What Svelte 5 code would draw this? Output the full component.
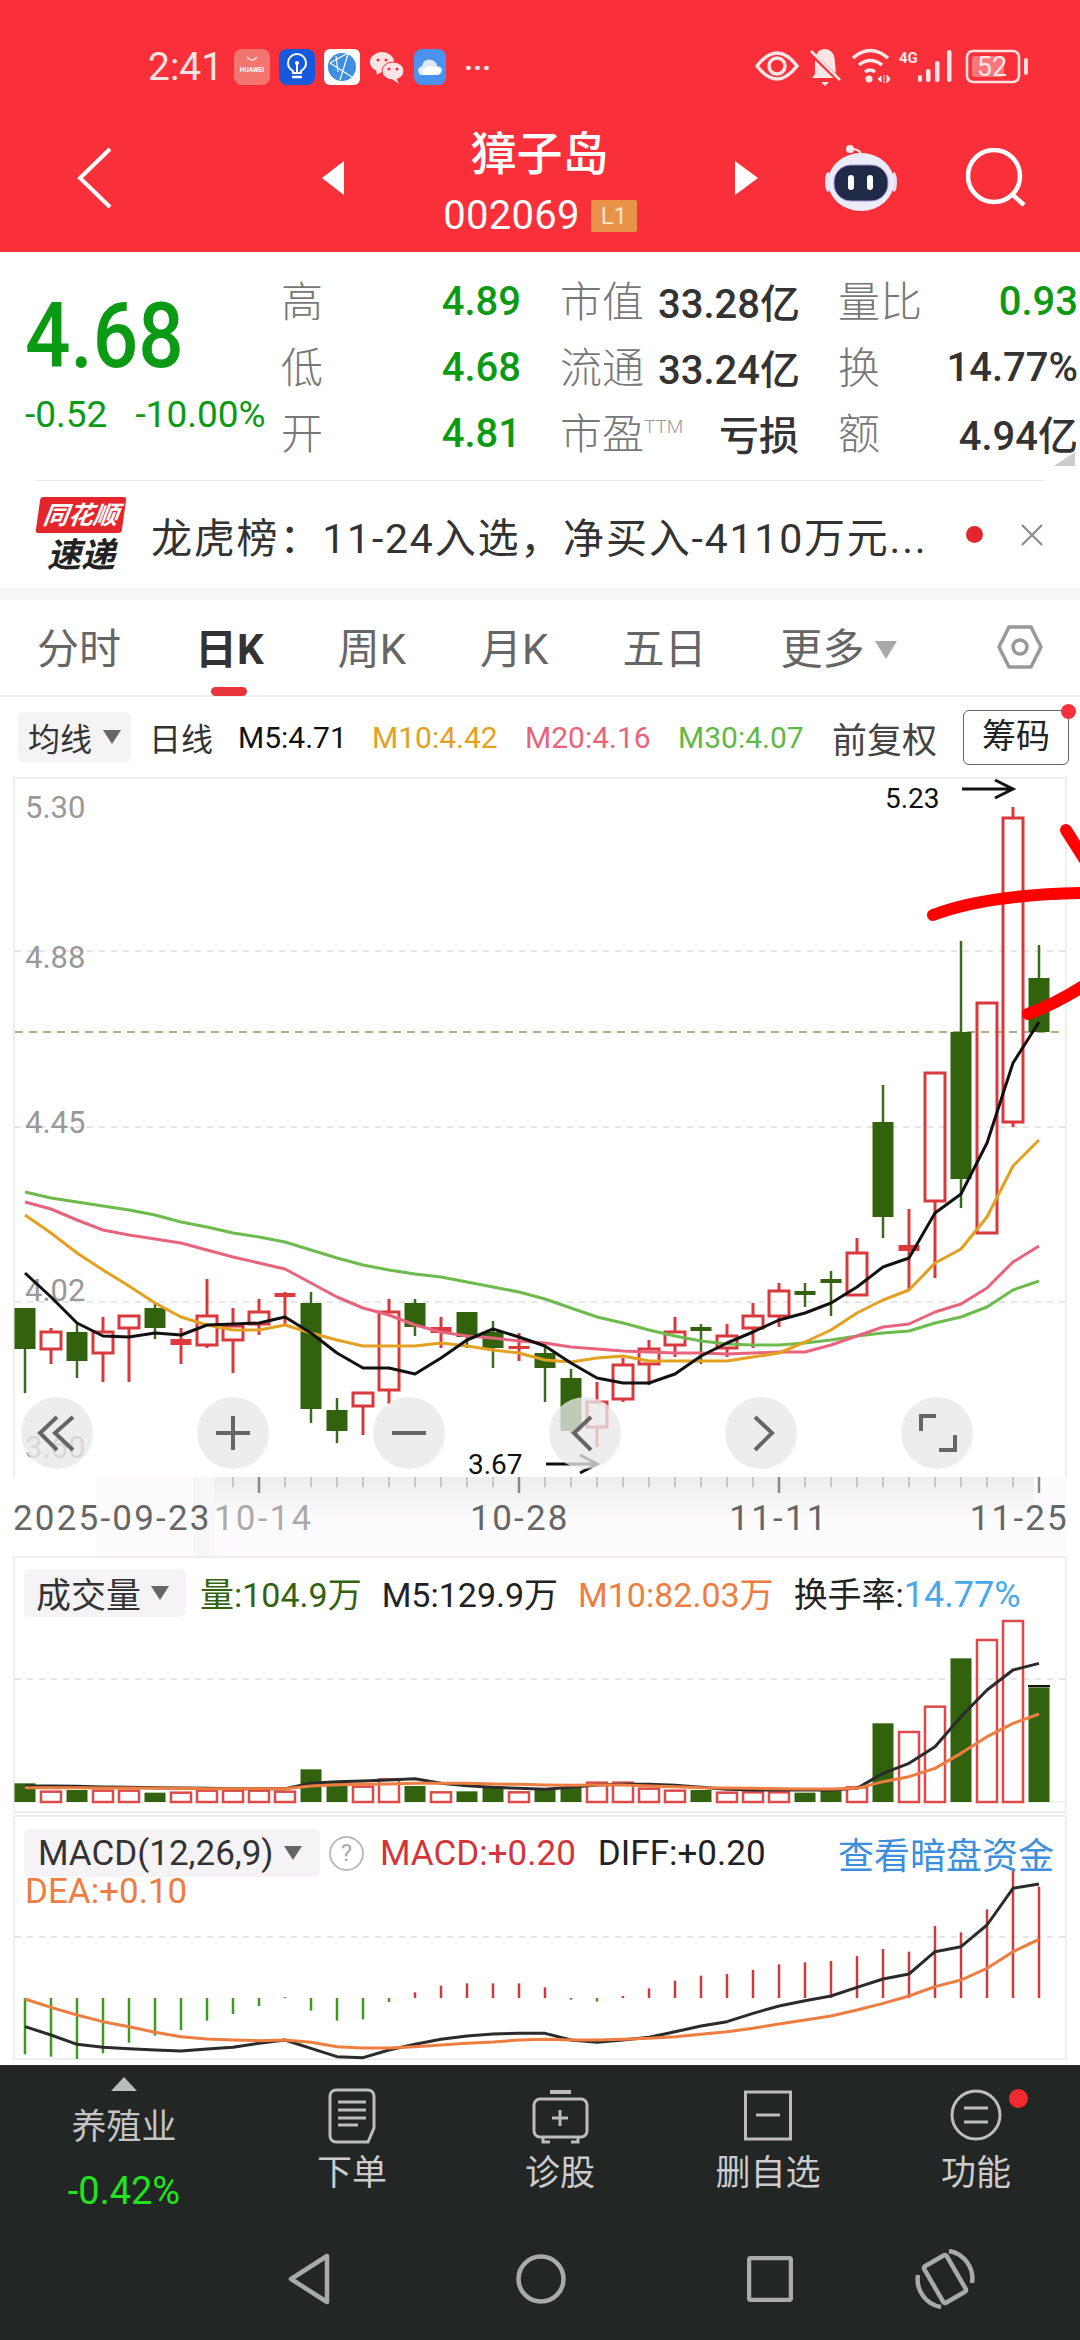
<script>
  const x = (i) => 25 + 26 * i;
  const pts = (ys) => ys.map((y, i) => `${x(i)},${y}`).join(' ');

  // [top of body, bottom of body, high, low, red?]
  const candles = [
    [1308, 1349, 1308, 1393, 0], [1332, 1349, 1328, 1364, 1], [1332, 1361, 1323, 1378, 0], [1332, 1353, 1317, 1382, 1],
    [1316, 1328, 1316, 1382, 1], [1308, 1328, 1303, 1339, 0], [1339, 1345, 1328, 1364, 1], [1316, 1345, 1279, 1348, 1],
    [1326, 1340, 1308, 1373, 1], [1312, 1324, 1299, 1335, 1], [1293, 1297, 1292, 1325, 1], [1303, 1409, 1292, 1423, 0],
    [1410, 1431, 1398, 1443, 0], [1393, 1406, 1393, 1435, 1], [1312, 1390, 1299, 1404, 1], [1303, 1327, 1299, 1336, 0],
    [1327, 1333, 1317, 1348, 1], [1312, 1337, 1312, 1348, 0], [1332, 1348, 1321, 1368, 0], [1346, 1349, 1333, 1361, 1],
    [1353, 1368, 1347, 1402, 0], [1378, 1431, 1369, 1433, 0], [1402, 1427, 1382, 1447, 1], [1365, 1399, 1358, 1402, 1],
    [1349, 1364, 1340, 1385, 1], [1332, 1345, 1317, 1357, 1], [1327, 1331, 1324, 1364, 0], [1336, 1348, 1324, 1357, 1],
    [1316, 1328, 1303, 1348, 1], [1291, 1316, 1283, 1327, 1], [1291, 1295, 1283, 1307, 0], [1279, 1283, 1271, 1316, 0],
    [1253, 1295, 1238, 1295, 1], [1122, 1217, 1085, 1238, 0], [1245, 1251, 1209, 1290, 1], [1073, 1201, 1073, 1278, 1],
    [1032, 1179, 941, 1208, 0], [1003, 1233, 1003, 1233, 1], [818, 1122, 807, 1127, 1], [978, 1032, 945, 1032, 0]
  ];

  const ma5 = [1273, 1297, 1323, 1336, 1337, 1333, 1335, 1325, 1324, 1323, 1317, 1333, 1353, 1368, 1368, 1374, 1358, 1340, 1329, 1337, 1346, 1363, 1378, 1383, 1383, 1374, 1356, 1343, 1332, 1320, 1313, 1303, 1287, 1267, 1258, 1213, 1194, 1143, 1063, 1022];
  const ma10 = [1215, 1233, 1253, 1270, 1286, 1303, 1317, 1325, 1330, 1330, 1325, 1333, 1340, 1346, 1346, 1346, 1343, 1346, 1350, 1353, 1360, 1362, 1358, 1356, 1361, 1361, 1361, 1361, 1357, 1353, 1342, 1330, 1313, 1300, 1290, 1263, 1249, 1217, 1166, 1140];
  const ma20 = [1202, 1209, 1220, 1230, 1235, 1239, 1243, 1250, 1257, 1263, 1269, 1283, 1297, 1308, 1315, 1325, 1332, 1336, 1338, 1341, 1343, 1347, 1349, 1351, 1352, 1353, 1353, 1354, 1353, 1352, 1352, 1345, 1336, 1327, 1324, 1312, 1304, 1288, 1262, 1246];
  const ma30 = [1192, 1198, 1202, 1206, 1210, 1215, 1222, 1227, 1233, 1237, 1242, 1250, 1258, 1265, 1270, 1274, 1277, 1282, 1287, 1292, 1299, 1308, 1317, 1323, 1330, 1336, 1341, 1344, 1345, 1345, 1343, 1340, 1336, 1333, 1331, 1323, 1317, 1307, 1290, 1281];

  const gridY = [951, 1127, 1302];
  const priceLabels = [['5.30', 818], ['4.88', 968], ['4.45', 1133], ['4.02', 1301]];

  const z = (v) => 1550 + v / 3;
  const volTops = [700, 725, 720, 722, 722, 728, 728, 722, 722, 722, 725, 658, 695, 710, 688, 708, 727, 724, 710, 727, 715, 712, 698, 698, 716, 722, 720, 728, 727, 727, 728, 722, 712, 520, 546, 470, 325, 270, 213, 412].map(z);
  const volMa5 = [708, 708, 709, 711, 712, 713, 714, 715, 716, 716, 716, 700, 695, 693, 690, 686, 700, 707, 712, 715, 718, 712, 705, 703, 703, 706, 712, 718, 720, 720, 720, 720, 715, 670, 640, 590, 500, 420, 360, 340].map(z);
  const volMa10 = [713, 713, 713, 714, 714, 715, 715, 716, 716, 716, 716, 708, 704, 703, 702, 700, 700, 700, 702, 703, 705, 706, 705, 705, 708, 710, 713, 714, 715, 716, 717, 717, 715, 695, 680, 655, 610, 560, 520, 492].map(z);

  const macdBars = [1513, 1520, 1527, 1510, 1478, 1457, 1440, 1412, 1392, 1368, 1341, 1382, 1412, 1408, 1356, 1327, 1307, 1300, 1300, 1300, 1312, 1349, 1355, 1338, 1315, 1292, 1277, 1272, 1260, 1243, 1237, 1233, 1218, 1197, 1205, 1128, 1147, 1078, 955, 1010].map(z);
  const macdDiff = [1430, 1455, 1483, 1492, 1496, 1500, 1503, 1497, 1492, 1480, 1470, 1495, 1520, 1523, 1500, 1483, 1468, 1458, 1452, 1450, 1450, 1470, 1477, 1470, 1462, 1445, 1428, 1415, 1390, 1368, 1352, 1338, 1312, 1287, 1272, 1205, 1190, 1125, 1015, 1002].map(z);
  const macdDea = [1347, 1372, 1395, 1415, 1430, 1447, 1460, 1467, 1470, 1472, 1470, 1477, 1490, 1494, 1494, 1490, 1485, 1480, 1476, 1470, 1468, 1470, 1470, 1468, 1465, 1460, 1453, 1445, 1435, 1422, 1410, 1398, 1380, 1360, 1338, 1310, 1290, 1255, 1205, 1168].map(z);

  const minorTicks = Array.from({ length: 32 }, (_, i) => 233 + 26 * i);
  const majorTicks = [259, 519, 779, 1039];
  const tabs = ['分时', '日K', '周K', '月K', '五日'];
</script>

<div class="page">
  <header>
    <div class="status">
      <span class="time">2:41</span>
      <div class="notifs">
        <svg width="36" height="36" viewBox="0 0 36 36">
          <rect width="36" height="36" rx="8" fill="#f2756f" />
          <path d="M13 8q5 6 10 0" fill="none" stroke="#ffd9d6" stroke-width="1.6" />
          <text x="18" y="23" class="hw">HUAWEI</text>
        </svg>
        <svg width="36" height="36" viewBox="0 0 36 36">
          <rect width="36" height="36" rx="8" fill="#1659dd" />
          <path d="M14 24v-2q-5-3-5-8a9 9 0 0 1 18 0q0 5-5 8v2z" fill="none" stroke="#fff" stroke-width="2" />
          <path d="M18 23v-8" stroke="#fff" stroke-width="2" />
          <circle cx="18" cy="14" r="2" fill="#fff" />
          <path d="M14 28h8" stroke="#fff" stroke-width="2.4" stroke-linecap="round" />
        </svg>
        <svg width="36" height="36" viewBox="0 0 36 36">
          <rect width="36" height="36" rx="6" fill="#fff" />
          <circle cx="18" cy="18" r="14" fill="#3f8ee2" />
          <path d="M6 14l18-10M6 14l22 14M24 5l-8 26M12 7l2 16" stroke="#fff" stroke-width="1.2" fill="none" />
        </svg>
        <svg width="36" height="36" viewBox="0 0 36 36">
          <ellipse cx="13" cy="13" rx="12" ry="10" fill="#ffe4e4" />
          <path d="M7 20l1 6 6-4z" fill="#ffe4e4" />
          <circle cx="9" cy="11" r="1.5" fill="#f9303a" />
          <circle cx="17" cy="11" r="1.5" fill="#f9303a" />
          <ellipse cx="24" cy="22" rx="11" ry="9" fill="#ffe4e4" stroke="#f9303a" />
          <path d="M27 29l3 6-7-5z" fill="#ffe4e4" />
          <circle cx="20" cy="20" r="1.5" fill="#f9303a" />
          <circle cx="28" cy="20" r="1.5" fill="#f9303a" />
        </svg>
        <svg width="32" height="36" viewBox="0 0 32 36">
          <rect width="32" height="36" rx="8" fill="#4b91ee" />
          <path d="M5 25q-3-6 3-8 2-8 10-6 5 2 5 6 6 1 5 5t-6 4H8q-2 0-3-1z" fill="#dbe9fb" />
          <path d="M10 26q-4-4 1-7 3-4 7-1 7-1 8 3 1 5-4 5z" fill="#fff" />
        </svg>
        <span class="more">···</span>
      </div>
      <svg class="sys" width="280" height="60" viewBox="750 37 280 60">
        <path d="M757 66q20-26 40 0q-20 26-40 0z" fill="none" stroke="#ffe6e6" stroke-width="3.5" />
        <circle cx="777" cy="66" r="8" fill="none" stroke="#ffe6e6" stroke-width="3.5" />
        <path d="M825 49q10 1 10 14l1 11 3 4h-27l3-4v-11q0-14 10-14z" fill="#ffe6e6" />
        <path d="M821 82h8l-4 4z" fill="#ffe6e6" />
        <path d="M810 52l30 29" stroke="#f9303a" stroke-width="5" />
        <path d="M811 51l29 29" stroke="#ffe6e6" stroke-width="2.5" />
        <path d="M853 58q17-15 35 0M859 65q11-9 23 0M865 72q5-4 10 0" fill="none" stroke="#ffe6e6" stroke-width="3.5" />
        <circle cx="869" cy="79" r="3.5" fill="#ffe6e6" />
        <path d="M881 76l-3 3 3 3zM884 75v8M887 75l3 4-3 4z" fill="#ffe6e6" stroke="#ffe6e6" />
        <text x="899" y="63" class="g4">4G</text>
        <rect x="918" y="75" width="4" height="7" rx="2" fill="#ffe6e6" />
        <rect x="926" y="69" width="4.5" height="13" rx="2" fill="#ffe6e6" />
        <rect x="935" y="61" width="4.5" height="21" rx="2" fill="#ffe6e6" />
        <rect x="947" y="50" width="4.5" height="32" rx="2" fill="#ffe6e6" />
        <rect x="967" y="51" width="52" height="31" rx="6" fill="none" stroke="#ffe0e0" stroke-width="2.6" />
        <rect x="972" y="56" width="32" height="21" rx="3" fill="#f9767c" />
        <text x="992" y="76" class="bat">52</text>
        <rect x="1024" y="58" width="4" height="17" rx="2" fill="#ffe0e0" />
      </svg>
    </div>

    <div class="titlebar">
      <svg class="back" width="35" height="62" viewBox="0 0 35 62">
        <path d="M33 2L3 31l30 29" fill="none" stroke="#fff" stroke-width="4" />
      </svg>
      <svg class="prev" width="22" height="34" viewBox="0 0 22 34"><path d="M22 0v34L0 17z" fill="#fff" /></svg>
      <div class="title">
        <div class="name">獐子岛</div>
        <div class="code">002069<span class="l1">L1</span></div>
      </div>
      <svg width="23" height="34" viewBox="0 0 23 34"><path d="M0 0v34l23-17z" fill="#fff" /></svg>
      <svg class="robot" width="72" height="68" viewBox="0 0 72 68">
        <circle cx="25" cy="5" r="4" fill="#f3e9f2" />
        <path d="M27 5q10 0 9 9" fill="none" stroke="#f3e9f2" stroke-width="2" />
        <ellipse cx="3" cy="38" rx="3" ry="10" fill="#e6e2f3" />
        <ellipse cx="69" cy="38" rx="3" ry="10" fill="#e6e2f3" />
        <ellipse cx="36" cy="38" rx="33" ry="29" fill="#ecebf8" />
        <rect x="9" y="21" width="54" height="36" rx="17" fill="#1f2a47" stroke="#a995e6" />
        <rect x="23" y="31" width="6" height="15" rx="3" fill="#fff" />
        <rect x="42" y="31" width="6" height="15" rx="3" fill="#fff" />
      </svg>
      <svg class="search" width="60" height="60" viewBox="0 0 60 60">
        <circle cx="28" cy="28" r="26" fill="none" stroke="#fff" stroke-width="4.5" />
        <path d="M47 47l11 10" stroke="#fff" stroke-width="4.5" />
      </svg>
    </div>
  </header>

  <section class="quote">
    <div class="price-col">
      <div class="price">4.68</div>
      <div class="change"><span>-0.52</span><span>-10.00%</span></div>
    </div>
    <div class="stats">
      <span class="lab">高</span><span class="val down">4.89</span>
      <span class="lab pl">市值</span><span class="val">33.28亿</span>
      <span class="lab pl">量比</span><span class="val down">0.93</span>
      <span class="lab">低</span><span class="val down">4.68</span>
      <span class="lab pl">流通</span><span class="val">33.24亿</span>
      <span class="lab pl">换</span><span class="val">14.77%</span>
      <span class="lab">开</span><span class="val down">4.81</span>
      <span class="lab pl">市盈<sup>TTM</sup></span><span class="val">亏损</span>
      <span class="lab pl">额</span><span class="val">4.94亿</span>
    </div>
    <div class="corner"></div>
  </section>

  <div class="rule"></div>

  <section class="news">
    <div class="logo">
      <div class="logo-top">同花顺</div>
      <div class="logo-bottom">速递</div>
    </div>
    <div class="news-text">龙虎榜：11-24入选，净买入-4110万元...</div>
    <span class="news-dot"></span>
    <svg width="22" height="22" viewBox="0 0 22 22"><path d="M1 1l20 20M21 1L1 21" stroke="#888" stroke-width="2" /></svg>
  </section>

  <nav class="tabs">
    {#each tabs as tab, i}
      <span class="tab" class:active={i === 1}>{tab}</span>
    {/each}
    <span class="tab more-tab">更多<i class="caret big"></i></span>
    <svg class="gear" width="46" height="46" viewBox="0 0 46 46">
      <path d="M12 3h22l10 20-10 20H12L2 23z" fill="none" stroke="#999" stroke-width="3.5" stroke-linejoin="round" />
      <circle cx="23" cy="23" r="7" fill="none" stroke="#999" stroke-width="3.5" />
    </svg>
  </nav>

  <div class="toolbar">
    <span class="tag">均线<i class="caret"></i></span>
    <span class="t1">日线</span>
    <span class="t2">M5:4.71</span>
    <span class="t3 c10">M10:4.42</span>
    <span class="t3 c20">M20:4.16</span>
    <span class="t3 c30">M30:4.07</span>
    <span class="t4">前复权</span>
    <span class="chip">筹码<i class="chip-dot"></i></span>
  </div>

  <section class="kline">
    <svg class="plot" width="1054" height="700" viewBox="13 777 1054 700">
      {#each gridY as y}
        <line x1="15" x2="1065" y1={y} y2={y} class="grid" />
      {/each}
      <line x1="15" x2="1065" y1="1032" y2="1032" class="last" />
      {#each priceLabels as [label, y]}
        <text x="25" {y} class="axis">{label}</text>
      {/each}
      <text x="25" y="1458" class="axis">3.60</text>

      {#each candles as [top, bottom, high, low, red], i}
        {#if red}
          <line x1={x(i)} x2={x(i)} y1={high} y2={top} class="wick-r" />
          <line x1={x(i)} x2={x(i)} y1={bottom} y2={low} class="wick-r" />
          {#if bottom - top < 7}
            <rect x={x(i) - 10.5} y={top} width="21" height={bottom - top} fill="#dc3a3c" />
          {:else}
            <rect x={x(i) - 10} y={top} width="20" height={bottom - top} class="body-r" />
          {/if}
        {:else}
          <line x1={x(i)} x2={x(i)} y1={high} y2={low} class="wick-g" />
          <rect x={x(i) - 10.5} y={top} width="21" height={bottom - top} fill="#33620f" />
        {/if}
      {/each}

      <polyline points={pts(ma30)} class="ln" stroke="#6cbb4c" />
      <polyline points={pts(ma20)} class="ln" stroke="#e8647c" />
      <polyline points={pts(ma10)} class="ln" stroke="#e4a021" />
      <polyline points={pts(ma5)} class="ln" stroke="#111" />

      <text x="885" y="808" class="mark">5.23</text>
      <path d="M962 789h50M995 780l18 9-18 9" class="arrow" />
      <text x="468" y="1474" class="mark">3.67</text>
      <path d="M546 1464h50M580 1455l17 9-17 9" class="arrow" />

      <path d="M933 915Q985 895 1080 893" class="pen" />
      <path d="M1028 1014Q1055 1004 1085 985" class="pen" />
      <path d="M1066 830L1085 860" class="pen" />
    </svg>
    <div class="kbtns">
      <button aria-label="back"><svg width="72" height="72" viewBox="0 0 72 72"><path d="M36 20L19 36l17 17M52 20L34 36l18 17" /></svg></button>
      <button aria-label="in"><svg width="72" height="72" viewBox="0 0 72 72"><path d="M19 36h34M36 19v34" /></svg></button>
      <button aria-label="out"><svg width="72" height="72" viewBox="0 0 72 72"><path d="M19 36h34" /></svg></button>
      <button aria-label="left"><svg width="72" height="72" viewBox="0 0 72 72"><path d="M42 20L25 36l17 17" /></svg></button>
      <button aria-label="right"><svg width="72" height="72" viewBox="0 0 72 72"><path d="M30 20l17 16-17 17" /></svg></button>
      <button aria-label="full"><svg width="72" height="72" viewBox="0 0 72 72"><path d="M20 34V19h15M54 38v15H38" /></svg></button>
    </div>
  </section>

  <svg class="dates" width="1080" height="79" viewBox="0 1477 1080 79">
    <defs>
      <linearGradient id="smear" x1="0" x2="0" y1="0" y2="1">
        <stop offset="0" stop-color="#eeeeee" />
        <stop offset="1" stop-color="#fbfafb" />
      </linearGradient>
    </defs>
    <rect x="96" y="1477" width="971" height="79" fill="#fdfbfd" />
    <rect x="193" y="1477" width="21" height="79" fill="#f7f7f7" />
    <rect x="214" y="1477" width="820" height="40" fill="url(#smear)" />
    {#each minorTicks as t}
      <line x1={t} x2={t} y1="1477" y2="1487" stroke="#bbb" stroke-width="1.5" />
    {/each}
    {#each majorTicks as t}
      <line x1={t} x2={t} y1="1477" y2="1493" stroke="#888" stroke-width="2.5" />
    {/each}
    <text x="13" y="1530" class="date">2025-09-23</text>
    <text x="214" y="1530" class="date" fill-opacity="0.55">10-14</text>
    <text x="520" y="1530" class="date mid">10-28</text>
    <text x="779" y="1530" class="date mid">11-11</text>
    <text x="1069" y="1530" class="date end">11-25</text>
  </svg>

  <section class="panel vol">
    <svg class="plot" width="1054" height="257" viewBox="13 1556 1054 257">
      <line x1="15" x2="1065" y1="1679" y2="1679" class="grid" />
      <line x1="15" x2="1065" y1="1802" y2="1802" class="base" />
      {#each volTops as top, i}
        {#if candles[i][4]}
          <rect x={x(i) - 10} y={top} width="20" height={1802 - top} class="body-v" />
        {:else}
          <rect x={x(i) - 10.5} y={top} width="21" height={1802 - top} fill="#33620f" />
        {/if}
      {/each}
      <line x1="1028" x2="1050" y1="1686" y2="1686" stroke="#111" stroke-width="2" />
      <polyline points={pts(volMa5)} class="ln" stroke="#2b2b2b" />
      <polyline points={pts(volMa10)} class="ln" stroke="#ee7d42" />
    </svg>
    <div class="legend">
      <span class="tag big">成交量<i class="caret"></i></span>
      <span class="lg first g">量:104.9万</span>
      <span class="lg">M5:129.9万</span>
      <span class="lg o">M10:82.03万</span>
      <span class="lg">换手率:<span class="b">14.77%</span></span>
    </div>
  </section>

  <section class="panel macd">
    <svg class="plot" width="1054" height="245" viewBox="13 1815 1054 245">
      <line x1="15" x2="1065" y1="1937" y2="1937" class="grid" />
      {#each macdBars as tip, i}
        <line x1={x(i)} x2={x(i)} y1="1998" y2={tip} stroke={tip > 1998 ? '#3f9a22' : '#cf3a3c'} stroke-width="2.5" />
      {/each}
      <polyline points={pts(macdDiff)} class="ln" stroke="#2b2b2b" />
      <polyline points={pts(macdDea)} class="ln" stroke="#ee7d42" />
    </svg>
    <div class="legend">
      <span class="tag big wide">MACD(12,26,9)<i class="caret"></i></span>
      <span class="help">?</span>
      <span class="lg first r">MACD:+0.20</span>
      <span class="lg">DIFF:+0.20</span>
      <span class="link">查看暗盘资金</span>
    </div>
    <div class="dea">DEA:+0.10</div>
  </section>

  <footer>
    <div class="actions">
      <div class="sector">
        <i class="up"></i>
        <span class="sector-name">养殖业</span>
        <span class="sector-pct">-0.42%</span>
      </div>
      <div class="action">
        <svg width="48" height="56" viewBox="0 0 48 56" class="ico">
          <path d="M8 2h32a6 6 0 0 1 6 6v32l-6 14H8a6 6 0 0 1-6-6V8a6 6 0 0 1 6-6z" />
          <path d="M10 14h28M10 22h28M10 30h28M10 37h20" />
        </svg>
        <span>下单</span>
      </div>
      <div class="action">
        <svg width="57" height="56" viewBox="0 0 57 56" class="ico">
          <path d="M18 4h21" stroke-width="4" />
          <rect x="2" y="11" width="53" height="38" rx="6" />
          <path d="M28 22v16M20 30h16M11 50v4h7M46 50v4h-7" />
        </svg>
        <span>诊股</span>
      </div>
      <div class="action">
        <svg width="48" height="56" viewBox="0 0 48 56" class="ico">
          <rect x="1.5" y="4" width="45" height="47" />
          <path d="M12 27h24" />
        </svg>
        <span>删自选</span>
      </div>
      <div class="action func">
        <svg width="52" height="56" viewBox="0 0 52 56" class="ico">
          <circle cx="26" cy="27" r="24" />
          <path d="M14 20h24M14 34h24" />
        </svg>
        <span>功能</span>
        <i class="func-dot"></i>
      </div>
    </div>
    <div class="sysnav">
      <svg width="44" height="52" viewBox="0 0 44 52" class="sn a">
        <path d="M40 3L4 26l36 23z" stroke-linejoin="round" />
      </svg>
      <svg width="50" height="50" viewBox="0 0 50 50" class="sn b"><circle cx="25" cy="25" r="22.5" /></svg>
      <svg width="46" height="46" viewBox="0 0 46 46" class="sn c"><rect x="2" y="2" width="42" height="42" rx="2" /></svg>
      <svg width="60" height="60" viewBox="0 0 60 60" class="sn d">
        <rect x="17" y="9" width="26" height="42" rx="2" transform="rotate(-30 30 30)" />
        <path d="M34 2A28 28 0 0 1 57 34M26 58A28 28 0 0 1 3 26" />
      </svg>
    </div>
  </footer>
</div>

<style>
  :global(body) {
    margin: 0;
    background: #fff;
  }

  .page {
    width: 1080px;
    height: 2340px;
    overflow: hidden;
    font-family: Roboto, "Noto Sans CJK SC", sans-serif;
    color: #333;
    background: #fff;
  }

  i {
    font-style: normal;
    display: inline-block;
  }

  header {
    height: 252px;
    background: #f9303a;
    color: #fff;
  }

  .status {
    height: 134px;
    display: flex;
    align-items: center;
    padding: 0 50px 0 148px;
    box-sizing: border-box;
  }

  .time {
    width: 86px;
    font-size: 39px;
    color: #fbe3e3;
  }

  .notifs {
    display: flex;
    align-items: center;
    gap: 9px;
  }

  .hw {
    font-size: 6.5px;
    font-weight: 700;
    fill: #fff;
    text-anchor: middle;
  }

  .more {
    margin-left: 9px;
    font-size: 30px;
    font-weight: 700;
    color: #fbe3e3;
  }

  .sys {
    margin-left: auto;
  }

  .g4 {
    font-size: 15px;
    font-weight: 700;
    fill: #ffe6e6;
  }

  .bat {
    font-size: 27px;
    fill: #ffe6e6;
    text-anchor: middle;
  }

  .titlebar {
    height: 118px;
    margin-top: -15px;
    display: flex;
    align-items: center;
    padding-left: 77px;
  }

  .prev {
    margin-left: 210px;
  }

  .titlebar > svg {
    flex: none;
  }

  .title {
    width: 391px;
    display: flex;
    flex-direction: column;
    align-items: center;
    margin-top: 8px;
  }

  .name {
    font-size: 46px;
    line-height: 46px;
    font-weight: 500;
  }

  .code {
    margin-top: 21px;
    height: 36px;
    display: flex;
    align-items: center;
    font-size: 40px;
    margin-left: 1px;
    letter-spacing: 0.3px;
  }

  .l1 {
    margin-left: 11px;
    width: 46px;
    height: 32px;
    line-height: 32px;
    text-align: center;
    font-size: 24px;
    letter-spacing: 0;
    background: #e8924a;
    color: #fde3c8;
    border-radius: 2px;
  }

  .robot {
    margin-left: 67px;
  }

  .search {
    margin-left: 69px;
  }

  .quote {
    position: relative;
    height: 228px;
    display: flex;
    padding-left: 25px;
  }

  .price-col {
    width: 256px;
    flex: none;
    padding-top: 34px;
  }

  .price {
    font-size: 91px;
    line-height: 100px;
    font-weight: 500;
    color: #0a9a14;
    transform: scaleX(0.88);
    transform-origin: left;
  }

  .change {
    margin-top: 9px;
    display: flex;
    gap: 28px;
    font-size: 37px;
    line-height: 40px;
    color: #0a9a14;
    white-space: nowrap;
  }

  .stats {
    display: grid;
    grid-template-columns: 120px 120px 137px 141px 139px 140px;
    grid-auto-rows: 66px;
    padding-top: 16px;
    align-items: center;
    white-space: nowrap;
  }

  .lab {
    font-size: 42px;
    color: #777;
    font-weight: 300;
    margin-top: -5px;
  }

  .lab.pl {
    padding-left: 39px;
  }

  .lab sup {
    font-size: 19px;
    vertical-align: 16px;
    line-height: 0;
    color: #999;
  }

  .val {
    font-size: 40px;
    font-weight: 500;
    text-align: right;
    color: #333;
  }

  .val.down {
    color: #0a9a14;
  }

  .corner {
    position: absolute;
    right: 5px;
    top: 200px;
    width: 0;
    height: 0;
    border-left: 21px solid transparent;
    border-bottom: 14px solid #ccc;
  }

  .rule {
    height: 1px;
    margin: 0 35px;
    background: #e8e8e8;
  }

  .news {
    height: 107px;
    display: flex;
    align-items: center;
    padding-left: 38px;
    border-bottom: 12px solid #f6f6f6;
  }

  .logo {
    width: 86px;
    flex: none;
    text-align: center;
    font-weight: 700;
    font-style: italic;
    line-height: 1;
  }

  .logo-top {
    background: #e4262c;
    color: #fff;
    font-size: 25px;
    padding: 6px 0 5px;
    border-radius: 3px;
    transform: skewX(-8deg);
    white-space: nowrap;
  }

  .logo-bottom {
    margin-top: 5px;
    font-size: 34px;
    color: #222;
  }

  .news-text {
    width: 815px;
    margin-left: 27px;
    font-size: 41px;
    letter-spacing: 1.8px;
    color: #333;
    white-space: nowrap;
    flex: none;
  }

  .news-dot {
    width: 17px;
    height: 17px;
    flex: none;
    border-radius: 50%;
    background: #e4262c;
  }

  .news svg {
    margin-left: 38px;
    flex: none;
  }

  .tabs {
    height: 97px;
    box-sizing: border-box;
    border-bottom: 2px solid #eee;
    display: flex;
    align-items: flex-start;
    gap: 74px;
    padding: 29px 0 0 37px;
    position: relative;
  }

  .tab {
    font-size: 42px;
    line-height: 42px;
    color: #666;
    white-space: nowrap;
  }

  .tab.active {
    color: #333;
    font-weight: 700;
    position: relative;
  }

  .tab.active::after {
    content: "";
    position: absolute;
    left: 16px;
    top: 58px;
    width: 36px;
    height: 9px;
    border-radius: 5px;
    background: #e8343a;
  }

  .more-tab {
    display: flex;
    align-items: center;
  }

  .caret {
    width: 0;
    height: 0;
    border-left: 9px solid transparent;
    border-right: 9px solid transparent;
    border-top: 14px solid #666;
    margin-left: 11px;
  }

  .caret.big {
    border-left-width: 11px;
    border-right-width: 11px;
    border-top: 18px solid #a9a9a9;
  }

  .gear {
    position: absolute;
    left: 997px;
    top: 24px;
  }

  .toolbar {
    height: 80px;
    display: flex;
    align-items: center;
    padding-left: 18px;
    white-space: nowrap;
    box-sizing: border-box;
  }

  .tag {
    height: 50px;
    display: inline-flex;
    align-items: center;
    padding-left: 10px;
    box-sizing: border-box;
    width: 113px;
    font-size: 32px;
    background: #f5f3f5;
    border-radius: 6px;
    color: #333;
    flex: none;
  }

  .t1 {
    margin-left: 18px;
    font-size: 32px;
    width: 89px;
    color: #333;
  }

  .t2 {
    font-size: 30px;
    width: 134px;
    color: #111;
  }

  .t3 {
    font-size: 30px;
    width: 153px;
  }

  .c10 { color: #e4a021; }
  .c20 { color: #e8647c; }
  .c30 { color: #62b845; width: 154px; }

  .t4 {
    font-size: 35px;
    color: #444;
    width: 131px;
  }

  .chip {
    position: relative;
    box-sizing: border-box;
    width: 106px;
    height: 55px;
    line-height: 51px;
    text-align: center;
    font-size: 34px;
    border: 1px solid #666;
    border-radius: 6px;
    color: #222;
  }

  .chip-dot {
    position: absolute;
    right: -8px;
    top: -7px;
    width: 15px;
    height: 15px;
    border-radius: 50%;
    background: #f9303a;
  }

  .kline,
  .panel {
    position: relative;
    margin: 0 13px;
    width: 1054px;
    box-sizing: border-box;
    border: 2px solid #eee;
  }

  .kline {
    height: 700px;
    border-bottom: 0;
  }

  .plot {
    position: absolute;
    left: -2px;
    top: -2px;
    overflow: visible;
  }

  .grid {
    stroke: #ddd;
    stroke-width: 1.5;
    stroke-dasharray: 6 6;
  }

  .last {
    stroke: #b8ab8c;
    stroke-width: 2;
    stroke-dasharray: 8 6;
  }

  .base {
    stroke: #eee;
    stroke-width: 1.5;
  }

  .axis {
    font-size: 31px;
    fill: #999;
  }

  .wick-r {
    stroke: #d8393d;
    stroke-width: 3;
  }

  .wick-g {
    stroke: #3d6a1f;
    stroke-width: 2.5;
  }

  .body-r {
    fill: none;
    stroke: #d8393d;
    stroke-width: 3;
  }

  .body-v {
    fill: none;
    stroke: #dd4a4a;
    stroke-width: 2.5;
  }

  .ln {
    fill: none;
    stroke-width: 3;
    stroke-linejoin: round;
  }

  .mark {
    font-size: 28px;
    fill: #111;
  }

  .arrow {
    fill: none;
    stroke: #111;
    stroke-width: 3;
  }

  .pen {
    fill: none;
    stroke: #ff0000;
    stroke-width: 12;
    stroke-linecap: round;
  }

  .kbtns {
    position: absolute;
    left: 6px;
    top: 618px;
    display: flex;
    gap: 104px;
  }

  .kbtns button {
    width: 72px;
    height: 72px;
    padding: 0;
    border: 0;
    border-radius: 50%;
    background: rgba(232, 232, 232, 0.78);
  }

  .kbtns svg {
    display: block;
    fill: none;
    stroke: #666;
    stroke-width: 4;
  }

  .dates {
    display: block;
  }

  .date {
    font-size: 35px;
    letter-spacing: 2.2px;
    fill: #666;
  }

  .mid {
    text-anchor: middle;
  }

  .end {
    text-anchor: end;
  }

  .panel.vol {
    height: 257px;
  }

  .panel.macd {
    height: 245px;
    margin-top: 2px;
  }

  .legend {
    position: absolute;
    left: 9px;
    right: 11px;
    top: 10px;
    display: flex;
    align-items: center;
    gap: 20px;
    font-size: 34px;
    white-space: nowrap;
    color: #222;
  }

  .macd .legend {
    font-size: 35px;
    gap: 22px;
  }

  .tag.big {
    width: 162px;
    height: 48px;
    padding-left: 12px;
    font-size: 35px;
  }

  .tag.big .caret {
    margin-left: 10px;
  }

  .tag.big.wide {
    width: 296px;
    padding-left: 14px;
    font-size: 35px;
  }

  .lg.first {
    margin-left: -6px;
  }

  .g { color: #33620f; }
  .o { color: #ee7d42; }
  .b { color: #4aa8e6; font-size: 36px; }
  .r { color: #d3353a; }

  .help {
    width: 31px;
    height: 31px;
    margin-left: -13px;
    flex: none;
    border: 2px solid #bbb;
    border-radius: 50%;
    font-size: 24px;
    line-height: 31px;
    text-align: center;
    color: #aaa;
  }

  .macd .lg.first {
    margin-left: -6px;
  }

  .link {
    margin-left: auto;
    font-size: 36px;
    color: #3c8fdc;
  }

  .dea {
    position: absolute;
    left: 10px;
    top: 55px;
    font-size: 35px;
    line-height: 40px;
    color: #ee7d42;
  }

  footer {
    margin-top: 5px;
    height: 275px;
    background: #222624;
    color: #ccc;
  }

  .actions {
    height: 175px;
    display: grid;
    grid-template-columns: 248px repeat(4, 208px);
  }

  .sector {
    display: flex;
    flex-direction: column;
    align-items: center;
    padding-top: 12px;
  }

  .up {
    width: 0;
    height: 0;
    border-left: 13px solid transparent;
    border-right: 13px solid transparent;
    border-bottom: 14px solid #bbb;
  }

  .sector-name {
    margin-top: 17px;
    font-size: 35px;
    line-height: 40px;
    color: #c4c4c4;
  }

  .sector-pct {
    margin-top: 23px;
    font-size: 38px;
    line-height: 40px;
    color: #1fe51f;
  }

  .action {
    position: relative;
    display: flex;
    flex-direction: column;
    align-items: center;
    padding-top: 23px;
    font-size: 35px;
    line-height: 40px;
  }

  .action span {
    margin-top: 10px;
  }

  .ico {
    fill: none;
    stroke: #bdbdbd;
    stroke-width: 3;
  }

  .func-dot {
    position: absolute;
    left: 137px;
    top: 24px;
    width: 19px;
    height: 19px;
    border-radius: 50%;
    background: #f02a30;
  }

  .sysnav {
    display: flex;
    align-items: center;
    height: 78px;
    padding: 0 0 0 287px;
  }

  .sn {
    fill: none;
    stroke: #aaa;
    stroke-width: 4.5;
    flex: none;
  }

  .sn.b { margin-left: 185px; }
  .sn.c { margin-left: 181px; }
  .sn.d { margin-left: 122px; }
</style>
